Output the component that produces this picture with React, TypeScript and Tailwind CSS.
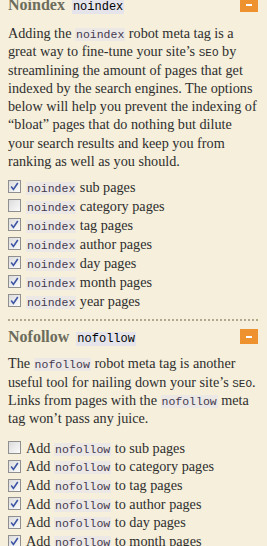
function Code({ children, dark = false }: { children: React.ReactNode; dark?: boolean }) {
  return (
    <code
      className={`px-[1px] font-['Liberation_Mono',monospace] leading-none ${
        dark ? "bg-[#e4e4ea] text-[12px] text-black font-normal" : "bg-[#ebe8e6] text-[11.5px] text-[#45394f]"
      }`}
    >
      {children}
    </code>
  );
}

function Seo() {
  return <span className="font-['Liberation_Mono',monospace] text-[11px] leading-none">SEO</span>;
}

function Toggle() {
  return (
    <button className="flex h-[15px] w-[18px] shrink-0 items-center justify-center bg-[#ee922f]">
      <span className="block h-[2px] w-[6px] bg-white" />
    </button>
  );
}

function Box({ checked }: { checked: boolean }) {
  return (
    <span className="flex h-[13px] w-[13px] shrink-0 items-center justify-center border border-[#8f8f8f] bg-gradient-to-br from-[#dcdcdc] to-[#fbfbfb]">
      {checked && (
        <svg width="9" height="9" viewBox="0 0 9 9">
          <path d="M1.2 4.6 L3.4 7.4 L7.8 1" fill="none" stroke="#3c55a5" strokeWidth="1.6" />
        </svg>
      )}
    </span>
  );
}

function Item({ checked, children, h }: { checked: boolean; children: React.ReactNode; h: string }) {
  return (
    <label className={`flex items-center gap-[5px] ${h}`}>
      <Box checked={checked} />
      <span className="leading-none">{children}</span>
    </label>
  );
}

const noindexItems: [string, boolean][] = [
  ["sub pages", true],
  ["category pages", false],
  ["tag pages", true],
  ["author pages", true],
  ["day pages", true],
  ["month pages", true],
  ["year pages", true],
];

const nofollowItems: [string, boolean][] = [
  ["sub pages", false],
  ["category pages", true],
  ["tag pages", true],
  ["author pages", true],
  ["day pages", true],
  ["month pages", true],
];

export default function App() {
  return (
    <div className="h-[546px] w-[267px] overflow-hidden bg-[#f5efdb] pl-[8px] pr-[6px] font-['Liberation_Serif',serif] text-[14.2px] leading-[18.3px] text-[#2e2e2e]">
      <section className="-mt-[3px] pr-[3px]">
        <div className="flex h-[15px] items-center justify-between">
          <h3 className="text-[16px] leading-none font-bold text-[#6d6c5c]">
            Noindex <span className="ml-[3px]"><Code dark>noindex</Code></span>
          </h3>
          <Toggle />
        </div>
      </section>
      <p className="mt-[12px] whitespace-nowrap">
        Adding the <Code>noindex</Code> robot meta tag is a<br />
        great way to fine-tune your site’s <Seo /> by<br />
        streamlining the amount of pages that get<br />
        indexed by the search engines. The options<br />
        below will help you prevent the indexing of<br />
        “bloat” pages that do nothing but dilute<br />
        your search results and keep you from<br />
        ranking as well as you should.
      </p>
      <div className="mt-[7px] flex flex-col">
        {noindexItems.map(([label, checked]) => (
          <Item key={label} checked={checked} h="h-[19px]">
            <Code>noindex</Code> {label}
          </Item>
        ))}
      </div>

      <div className="mt-[9px] mr-[3px] border-t-2 border-dotted border-[#b3a98a]" />

      <section className="mt-[8px] pr-[3px]">
        <div className="flex h-[15px] items-center justify-between">
          <h3 className="text-[16px] leading-none font-bold text-[#6d6c5c]">
            Nofollow <span className="ml-[3px]"><Code dark>nofollow</Code></span>
          </h3>
          <Toggle />
        </div>
      </section>
      <p className="mt-[10px] whitespace-nowrap">
        The <Code>nofollow</Code> robot meta tag is another<br />
        useful tool for nailing down your site’s <Seo />.<br />
        Links from pages with the <Code>nofollow</Code> meta<br />
        tag won’t pass any juice.
      </p>
      <div className="mt-[11px] flex flex-col">
        {nofollowItems.map(([label, checked]) => (
          <Item key={label} checked={checked} h="h-[18.7px]">
            Add <Code>nofollow</Code> to {label}
          </Item>
        ))}
      </div>
    </div>
  );
}
